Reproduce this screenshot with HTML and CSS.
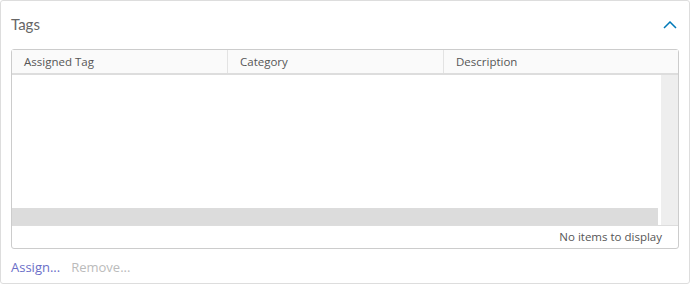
FILE: index.html
```html
<!DOCTYPE html>
<html>
<head>
  <title>Tags</title>
  <link rel="stylesheet" href="styles.css">
</head>
<body>
  <div class="card">
    <div class="card-header">
      <span class="card-title">Tags</span>
      <svg class="chevron" width="14" height="8" viewBox="0 0 14 8">
        <polyline points="1,7 7,1 13,7" fill="none" stroke="#0079b8" stroke-width="1.5"/>
      </svg>
    </div>
    <div class="grid">
      <div class="grid-head">
        <div class="grid-col">Assigned Tag</div>
        <div class="grid-col">Category</div>
        <div class="grid-col last">Description</div>
      </div>
      <div class="grid-body">
        <div class="grid-rows">
          <div class="grid-space"></div>
          <div class="hscroll"></div>
        </div>
        <div class="vscroll"></div>
      </div>
      <div class="grid-foot">No items to display</div>
    </div>
    <div class="actions">
      <a class="action" href="#">Assign...</a>
      <span class="action disabled">Remove...</span>
    </div>
  </div>
</body>
</html>
```

FILE: styles.css
```css
body {
  margin: 0;
  font-family: "Open Sans", Lato, sans-serif;
  background-color: #fff;
}

.card {
  width: 690px;
  height: 284px;
  box-sizing: border-box;
  border: 1px solid #ddd;
  border-radius: 3px;
  padding: 0 10px;
}

.card-header {
  height: 48px;
  display: flex;
  align-items: center;
  justify-content: space-between;
}

.card-title {
  font-family: Lato, sans-serif;
  font-size: 15px;
  color: #666;
  margin-top: -2px;
}

.chevron {
  margin-right: 2px;
  margin-top: -1px;
}

.grid {
  height: 200px;
  box-sizing: border-box;
  border: 1px solid #ccc;
  border-radius: 3px;
  display: flex;
  flex-direction: column;
}

.grid-head {
  display: flex;
  height: 23px;
  background-color: #fafafa;
  border-bottom: 2px solid #ddd;
}

.grid-col {
  width: 216px;
  box-sizing: border-box;
  padding-left: 12px;
  font-size: 11.5px;
  color: #565656;
  line-height: 23px;
  border-right: 1px solid #e3e3e3;
}

.grid-col.last {
  flex: 1;
  border-right: none;
}

.grid-body {
  flex: 1;
  display: flex;
}

.grid-rows {
  flex: 1;
  display: flex;
  flex-direction: column;
  padding-right: 3px;
}

.grid-space {
  flex: 1;
}

.hscroll {
  height: 17px;
  background-color: #dcdcdc;
}

.vscroll {
  width: 17px;
  background-color: #eeeeee;
}

.grid-foot {
  height: 22px;
  border-top: 1px solid #ddd;
  font-size: 11.5px;
  color: #565656;
  text-align: right;
  line-height: 22px;
  padding-right: 16px;
}

.actions {
  display: flex;
  gap: 11px;
  padding-top: 9px;
}

.action {
  font-size: 13px;
  color: #6a6ec8;
  text-decoration: none;
}

.action.disabled {
  color: #bbb;
}
```
